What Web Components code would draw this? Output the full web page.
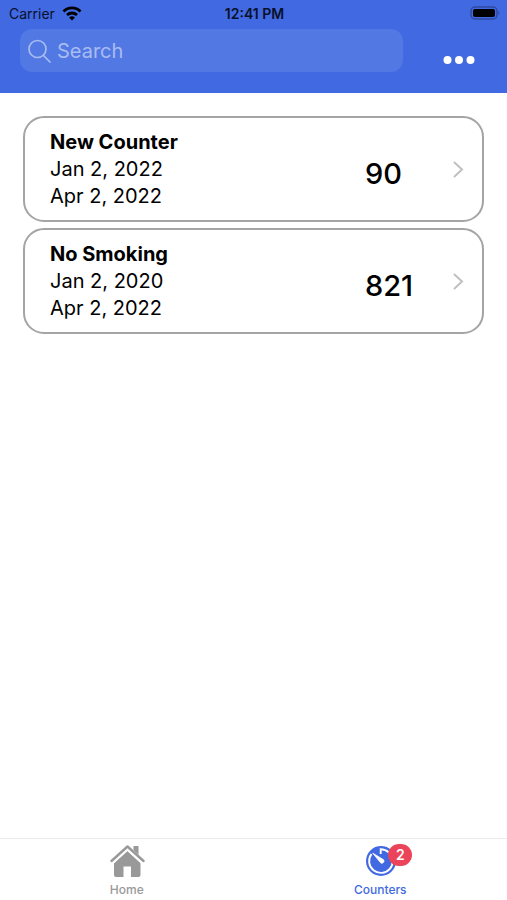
<!DOCTYPE html>
<html lang="en">
<head>
  <meta charset="utf-8">
  <meta name="viewport" content="width=device-width, initial-scale=1">
  <title>Counters</title>
  <style>
    body {
      margin: 0;
      background: white;
      color: black;
      font-family: Inter, "Liberation Sans", sans-serif;
    }
  </style>
</head>
<body>
  <counter-app>
    <status-bar slot="header" carrier="Carrier" time="12:41 PM"></status-bar>
    <search-bar slot="header"></search-bar>
    <counter-card days="90">
      <span slot="name">New Counter</span>
      <span slot="from">Jan 2, 2022</span>
      <span slot="to">Apr 2, 2022</span>
    </counter-card>
    <counter-card days="821">
      <span slot="name">No Smoking</span>
      <span slot="from">Jan 2, 2020</span>
      <span slot="to">Apr 2, 2022</span>
    </counter-card>
    <tab-item slot="tabs" href="#home">
      <svg slot="icon" width="36" height="34" viewBox="0 0 36 34" fill="#999" aria-hidden="true">
        <path d="M24.500 2h5v9l-5-5z"/>
        <path d="M18 6.500L31.500 19V31a2 2 0 0 1-2 2H22V22.500H14.500V33H7a2 2 0 0 1-2-2V19z"/>
        <path d="M2.500 18.500L18.500 4L34.500 18.500" fill="none" stroke="white" stroke-width="4.500"/>
        <path d="M2.500 17L18.500 2.500L34.500 17" fill="none" stroke="#999" stroke-width="2.400" stroke-linecap="round" stroke-linejoin="round"/>
      </svg>
      Home
    </tab-item>
    <tab-item slot="tabs" href="#counters" active badge="2">
      <svg slot="icon" width="36" height="34" viewBox="0 0 36 34" aria-hidden="true">
        <circle cx="19" cy="17" r="15" fill="#4169e1"/>
        <path d="M9.500 10A11.800 11.800 0 1 0 27 8.500Q23.500 5.400 18.700 5.200V10" fill="none" stroke="white" stroke-width="1.900"/>
        <path d="M10.800 9.200L21.600 15.800a2.200 2.200 0 0 1-2.800 3.200z" fill="white" stroke="white" stroke-width="0.800" stroke-linejoin="round"/>
      </svg>
      Counters
    </tab-item>
  </counter-app>

  <script>
    class CounterApp extends HTMLElement {
      constructor() {
        super();
        this.attachShadow({mode: 'open'});
      }

      connectedCallback() {
        this.shadowRoot.innerHTML = `
          <style>
            :host {
              display: flex;
              flex-direction: column;
              min-height: 100vh;
            }
            header {
              background: #4169e1;
            }
            main {
              flex: 1;
              display: flex;
              flex-direction: column;
              gap: 6px;
              padding: 23px;
            }
            nav {
              display: flex;
              border-top: 1px solid #ececec;
              background: white;
            }
          </style>
          <header><slot name="header"></slot></header>
          <main><slot></slot></main>
          <nav><slot name="tabs"></slot></nav>
        `;
      }
    }

    class StatusBar extends HTMLElement {
      constructor() {
        super();
        this.attachShadow({mode: 'open'});
      }

      connectedCallback() {
        this.shadowRoot.innerHTML = `
          <style>
            :host {
              display: grid;
              grid-template-columns: 1fr auto 1fr;
              align-items: center;
              height: 26px;
              padding: 0 7px 2px 9px;
              font-size: 14px;
              color: #08102c;
            }
            .carrier {
              display: flex;
              align-items: center;
              gap: 7px;
            }
            .time {
              font-weight: 600;
            }
            .battery {
              justify-self: end;
            }
          </style>
          <span class="carrier">
            ${this.getAttribute('carrier')}
            <svg width="20" height="16" viewBox="0 0 20 16" fill="none" stroke="black" stroke-width="2.800" aria-hidden="true">
              <path d="M1.500 6.500a12 12 0 0 1 17 0"/>
              <path d="M5 10a7.200 7.200 0 0 1 10 0"/>
              <path d="M10 15.500L7 12.500a4.200 4.200 0 0 1 6 0z" fill="black" stroke="none"/>
            </svg>
          </span>
          <span class="time">${this.getAttribute('time')}</span>
          <svg class="battery" width="30" height="14" viewBox="0 0 30 14" aria-hidden="true">
            <rect x="1" y="1" width="26" height="12" rx="4" fill="none" stroke="#2e4aa0" stroke-width="1.500"/>
            <rect x="3" y="3" width="22" height="8" rx="2" fill="black"/>
            <path d="M28.500 5a2.500 2.500 0 0 1 0 4z" fill="#2e4aa0"/>
          </svg>
        `;
      }
    }

    class SearchBar extends HTMLElement {
      constructor() {
        super();
        this.attachShadow({mode: 'open'});
      }

      connectedCallback() {
        this.shadowRoot.innerHTML = `
          <style>
            * {
              box-sizing: border-box;
            }
            :host {
              display: flex;
              align-items: center;
              padding: 1px 24px 21px 20px;
            }
            label {
              flex: 1;
              display: flex;
              align-items: center;
              gap: 6px;
              height: 43px;
              padding: 0 8px;
              border-radius: 12px;
              background: #5278e4;
            }
            input {
              flex: 1;
              min-width: 0;
              padding: 0;
              border: none;
              outline: none;
              background: none;
              color: white;
              font: inherit;
              font-size: 20px;
            }
            input::placeholder {
              color: #a9bcf2;
              opacity: 1;
            }
            button {
              display: flex;
              align-items: end;
              height: 43px;
              margin-left: 32px;
              padding: 0 8px;
              border: none;
              background: none;
              cursor: pointer;
            }
          </style>
          <label>
            <svg width="23" height="24" viewBox="0 0 23 24" fill="none" stroke="#a9bcf2" stroke-width="1.700" stroke-linecap="round" aria-hidden="true">
              <circle cx="9.500" cy="10" r="8.500"/>
              <path d="M15.500 16.500L22 23"/>
            </svg>
            <input type="text" placeholder="Search" name="search" aria-label="Search">
          </label>
          <button type="button" aria-label="More">
            <svg width="32" height="24" viewBox="0 0 32 24" fill="white" aria-hidden="true">
              <circle cx="4.500" cy="12" r="4"/>
              <circle cx="16" cy="12" r="4"/>
              <circle cx="27.500" cy="12" r="4"/>
            </svg>
          </button>
        `;
      }
    }

    class CounterCard extends HTMLElement {
      constructor() {
        super();
        this.attachShadow({mode: 'open'});
      }

      connectedCallback() {
        this.shadowRoot.innerHTML = `
          <style>
            :host {
              display: block;
            }
            article {
              display: flex;
              align-items: center;
              padding: 11px 17px 10px 25px;
              border: 2px solid #a4a4a4;
              border-radius: 21px;
            }
            .info {
              flex: 1;
              font-size: 20px;
              line-height: 27px;
            }
            .info div, h2 {
              margin: 0;
            }
            h2 {
              font-size: 20px;
              font-weight: 700;
            }
            .days {
              width: 86px;
              padding-top: 8px;
              font-size: 29px;
              font-weight: 500;
            }
            svg {
              display: block;
            }
          </style>
          <article>
            <div class="info">
              <h2><slot name="name"></slot></h2>
              <div><slot name="from"></slot></div>
              <div><slot name="to"></slot></div>
            </div>
            <div class="days">${this.getAttribute('days')}</div>
            <svg width="14" height="18" viewBox="0 0 14 18" fill="none" stroke="#c0c0c0" stroke-width="2" aria-hidden="true">
              <path d="M3 1L11 8.500L3 16"/>
            </svg>
          </article>
        `;
      }
    }

    class TabItem extends HTMLElement {
      constructor() {
        super();
        this.attachShadow({mode: 'open'});
      }

      connectedCallback() {
        const badge = this.getAttribute('badge');
        this.shadowRoot.innerHTML = `
          <style>
            :host {
              flex: 1;
              color: #999;
            }
            :host([active]) {
              color: #4169e1;
            }
            a {
              display: flex;
              flex-direction: column;
              align-items: center;
              gap: 4px;
              padding: 5px 0 2px;
              color: inherit;
              text-decoration: none;
              font-size: 12px;
              font-weight: 500;
              line-height: 16px;
            }
            .icon {
              position: relative;
              display: flex;
            }
            .badge {
              position: absolute;
              top: 0;
              left: 26px;
              min-width: 24px;
              border-radius: 11px;
              background: #eb445a;
              color: white;
              text-align: center;
              font-size: 14px;
              font-weight: 600;
              line-height: 22px;
            }
          </style>
          <a href="${this.getAttribute('href')}">
            <span class="icon">
              <slot name="icon"></slot>
              ${badge ? `<span class="badge">${badge}</span>` : ''}
            </span>
            <span><slot></slot></span>
          </a>
        `;
      }
    }

    customElements.define('counter-app', CounterApp);
    customElements.define('status-bar', StatusBar);
    customElements.define('search-bar', SearchBar);
    customElements.define('counter-card', CounterCard);
    customElements.define('tab-item', TabItem);
  </script>
</body>
</html>
